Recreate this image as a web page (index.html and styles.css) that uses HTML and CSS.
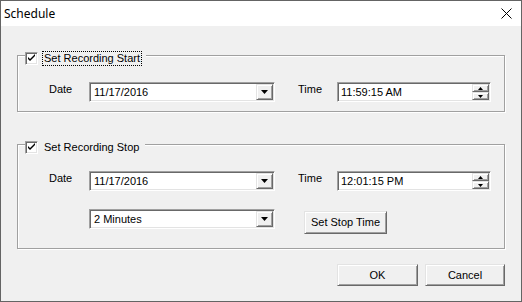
FILE: index.html
```html
<!DOCTYPE html>
<html>
<head>
<meta charset="utf-8">
<link rel="stylesheet" href="styles.css">
</head>
<body>
<div class="window">
  <div class="titlebar">
    <span class="title">Schedule</span>
    <svg class="close" width="11" height="11" viewBox="0 0 11 11"><path d="M0.5 0.5 L10.5 10.5 M10.5 0.5 L0.5 10.5" stroke="#000" stroke-width="1" fill="none"/></svg>
  </div>
  <div class="body">
    <div class="group">
      <div class="legend">
        <span class="check"><svg width="9" height="9" viewBox="0 0 9 9"><path d="M1 3 L1 5 L3 7 L8 2 L8 0 L3 5 Z" fill="#000"/></svg></span>
        <span class="legend-label focus">Set Recording Start</span>
      </div>
      <div class="row">
        <span class="lbl">Date</span>
        <div class="field combo"><span class="val">11/17/2016</span><span class="btn drop"><svg width="7" height="4" viewBox="0 0 7 4"><path d="M0 0 H7 L3.5 4 Z" fill="#000"/></svg></span></div>
        <span class="lbl lbl-time">Time</span>
        <div class="field timefield"><span class="val">11:59:15 AM</span><span class="spin"><span class="btn sbtn"><svg width="5" height="3" viewBox="0 0 5 3"><path d="M2.5 0 L5 3 H0 Z" fill="#000"/></svg></span><span class="btn sbtn"><svg width="5" height="3" viewBox="0 0 5 3"><path d="M0 0 H5 L2.5 3 Z" fill="#000"/></svg></span></span></div>
      </div>
    </div>
    <div class="group group2">
      <div class="legend">
        <span class="check"><svg width="9" height="9" viewBox="0 0 9 9"><path d="M1 3 L1 5 L3 7 L8 2 L8 0 L3 5 Z" fill="#000"/></svg></span>
        <span class="legend-label">Set Recording Stop</span>
      </div>
      <div class="row">
        <span class="lbl">Date</span>
        <div class="field combo"><span class="val">11/17/2016</span><span class="btn drop"><svg width="7" height="4" viewBox="0 0 7 4"><path d="M0 0 H7 L3.5 4 Z" fill="#000"/></svg></span></div>
        <span class="lbl lbl-time">Time</span>
        <div class="field timefield"><span class="val">12:01:15 PM</span><span class="spin"><span class="btn sbtn"><svg width="5" height="3" viewBox="0 0 5 3"><path d="M2.5 0 L5 3 H0 Z" fill="#000"/></svg></span><span class="btn sbtn"><svg width="5" height="3" viewBox="0 0 5 3"><path d="M0 0 H5 L2.5 3 Z" fill="#000"/></svg></span></span></div>
      </div>
      <div class="row row2">
        <div class="field combo"><span class="val">2 Minutes</span><span class="btn drop"><svg width="7" height="4" viewBox="0 0 7 4"><path d="M0 0 H7 L3.5 4 Z" fill="#000"/></svg></span></div>
        <span class="btn push stoptime">Set Stop Time</span>
      </div>
    </div>
    <div class="footer">
      <span class="btn push ok">OK</span>
      <span class="btn push cancel">Cancel</span>
    </div>
  </div>
</div>
</body>
</html>
```
FILE: styles.css
```css
* { box-sizing: border-box; }
html, body { margin: 0; padding: 0; background: #f0f0f0; }
.window {
  width: 522px;
  height: 302px;
  border: 1px solid #646464;
  display: flex;
  flex-direction: column;
  font-family: "Liberation Sans", Arial, sans-serif;
  font-size: 11px;
  color: #000;
  background: #f0f0f0;
}
.titlebar {
  height: 25px;
  background: #fff;
  display: flex;
  align-items: center;
  padding: 0 9px 0 3px;
  flex: none;
}
.title {
  font-family: "Noto Sans", "Open Sans", sans-serif;
  font-size: 12px;
  line-height: 16px;
}
.close { margin-left: auto; display: block; }
.body {
  flex: 1;
  padding: 29px 16px 0 16px;
  display: flex;
  flex-direction: column;
}
.group {
  border: 1px solid #a0a0a0;
  box-shadow: inset 1px 1px 0 #fff, 1px 1px 0 #fff;
  padding: 0 0 9px 0;
}
.group2 { margin-top: 32px; padding-bottom: 14px; }
.legend {
  display: flex;
  align-items: center;
  height: 15px;
  margin: -5px 0 0 7px;
  padding-right: 4px;
  background: #f0f0f0;
  width: max-content;
}
.check {
  width: 13px;
  height: 13px;
  background: #fff;
  border: 1px solid;
  border-color: #a0a0a0 #fff #fff #a0a0a0;
  box-shadow: inset 1px 1px 0 #696969, inset -1px -1px 0 #e3e3e3;
  display: flex;
  align-items: center;
  justify-content: center;
}
.check svg { display: block; }
.legend-label {
  margin-left: 4px;
  height: 15px;
  line-height: 13px;
  padding: 0 1px;
  border: 1px solid transparent;
  white-space: nowrap;
}
.focus { border: 1px dotted #000; }
.row {
  display: flex;
  align-items: flex-start;
  margin-top: 16px;
  padding-left: 31px;
}
.row2 { margin-top: 18px; padding-left: 71px; }
.lbl {
  width: 40px;
  line-height: 13px;
  margin-top: 1px;
}
.lbl-time { margin-left: 23px; width: 39px; }
.field {
  height: 20px;
  background: #fff;
  border: 1px solid;
  border-color: #a0a0a0 #fff #fff #a0a0a0;
  box-shadow: inset 1px 1px 0 #696969, inset -1px -1px 0 #e3e3e3;
  display: flex;
  align-items: stretch;
  padding: 1px;
}
.combo { width: 186px; }
.timefield { width: 154px; }
.val {
  flex: 1;
  line-height: 13px;
  padding: 2px 0 0 3px;
  white-space: nowrap;
}
.timefield .val { padding-left: 2px; }
.btn {
  background: #f0f0f0;
  border: 1px solid;
  border-color: #e3e3e3 #696969 #696969 #e3e3e3;
  box-shadow: inset 1px 1px 0 #fff, inset -1px -1px 0 #a0a0a0;
  display: flex;
  align-items: center;
  justify-content: center;
}
.btn svg { display: block; }
.drop { width: 17px; }
.spin { width: 17px; display: flex; flex-direction: column; }
.sbtn { height: 8px; }
.push {
  height: 22px;
  line-height: 13px;
  white-space: nowrap;
}
.stoptime { width: 83px; height: 23px; margin: 2px 0 0 29px; }
.footer {
  display: flex;
  justify-content: flex-end;
  gap: 7px;
  margin-top: 15px;
}
.ok { width: 81px; }
.cancel { width: 80px; }
```
